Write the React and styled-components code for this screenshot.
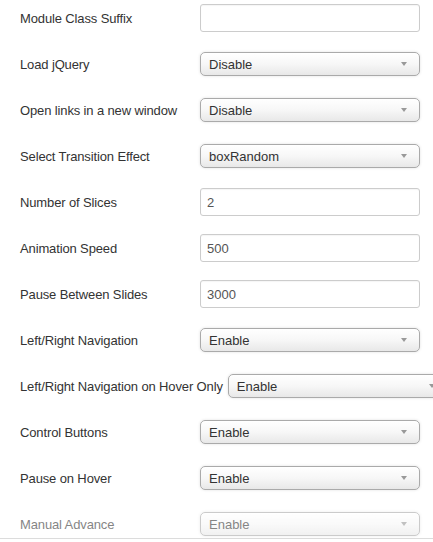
import React from 'react';
import styled, { createGlobalStyle } from 'styled-components';

const GlobalStyle = createGlobalStyle`
  html, body {
    margin: 0;
    padding: 0;
    background: #fff;
    overflow: hidden;
  }
  body {
    font-family: "Liberation Sans", Arial, sans-serif;
    font-size: 13px;
    color: #333;
  }
`;

const fields = [
  { label: 'Module Class Suffix', type: 'input', value: '' },
  { label: 'Load jQuery', type: 'select', value: 'Disable' },
  { label: 'Open links in a new window', type: 'select', value: 'Disable' },
  { label: 'Select Transition Effect', type: 'select', value: 'boxRandom' },
  { label: 'Number of Slices', type: 'input', value: '2' },
  { label: 'Animation Speed', type: 'input', value: '500' },
  { label: 'Pause Between Slides', type: 'input', value: '3000' },
  { label: 'Left/Right Navigation', type: 'select', value: 'Enable' },
  { label: 'Left/Right Navigation on Hover Only', type: 'select', value: 'Enable' },
  { label: 'Control Buttons', type: 'select', value: 'Enable' },
  { label: 'Pause on Hover', type: 'select', value: 'Enable' },
  { label: 'Manual Advance', type: 'select', value: 'Enable', faded: true },
];

export default function App() {
  return (
    <>
      <GlobalStyle />
      <Form>
        {fields.map((f) => (
          <Row key={f.label} $faded={f.faded}>
            <Label>{f.label}</Label>
            {f.type === 'input' ? (
              <TextBox>{f.value}</TextBox>
            ) : (
              <SelectBox>
                <span>{f.value}</span>
                <Caret />
              </SelectBox>
            )}
          </Row>
        ))}
      </Form>
    </>
  );
}

const Form = styled.div`
  display: flex;
  flex-direction: column;
  gap: 18px;
  padding: 4px 0 0 20px;
  border-bottom: 1px solid #dcdcdc;
  width: 100%;
  box-sizing: border-box;
`;

const Row = styled.div`
  display: flex;
  align-items: center;
  height: 28px;
  white-space: nowrap;
  opacity: ${(p) => (p.$faded ? 0.6 : 1)};
`;

const Label = styled.label`
  min-width: 175px;
  padding: 1px 5px 0 0;
  flex-shrink: 0;
  color: #333;
  line-height: 18px;
  letter-spacing: -0.01em;
`;

const TextBox = styled.div`
  box-sizing: border-box;
  width: 220px;
  height: 28px;
  flex-shrink: 0;
  border: 1px solid #ccc;
  border-radius: 3px;
  padding: 1px 6px 0;
  display: flex;
  align-items: center;
  color: #555;
  background: #fff;
  box-shadow: inset 0 1px 1px rgba(0, 0, 0, 0.04);
`;

const SelectBox = styled.div`
  box-sizing: border-box;
  width: 220px;
  height: 24px;
  flex-shrink: 0;
  border: 1px solid #aaa;
  border-radius: 5px;
  padding: 0 12px 0 8px;
  display: flex;
  align-items: center;
  justify-content: space-between;
  color: #333;
  background: linear-gradient(to bottom, #ffffff 0%, #f7f7f7 50%, #e8e8e8 100%);
  box-shadow: 0 0 3px rgba(0, 0, 0, 0.12), inset 0 1px 0 #fff;
`;

const Caret = styled.i`
  width: 0;
  height: 0;
  border-left: 3px solid transparent;
  border-right: 3px solid transparent;
  border-top: 4px solid #999;
`;
